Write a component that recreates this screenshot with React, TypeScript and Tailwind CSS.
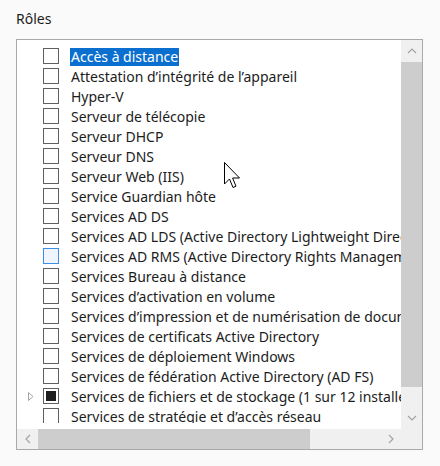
import React from "react";

type Item = { label: string; state?: "none" | "selected" | "hover" | "partial"; expander?: boolean };

const items: Item[] = [
  { label: "Accès à distance", state: "selected" },
  { label: "Attestation d’intégrité de l’appareil" },
  { label: "Hyper-V" },
  { label: "Serveur de télécopie" },
  { label: "Serveur DHCP" },
  { label: "Serveur DNS" },
  { label: "Serveur Web (IIS)" },
  { label: "Service Guardian hôte" },
  { label: "Services AD DS" },
  { label: "Services AD LDS (Active Directory Lightweight Directory Services)" },
  { label: "Services AD RMS (Active Directory Rights Management Services)", state: "hover" },
  { label: "Services Bureau à distance" },
  { label: "Services d’activation en volume" },
  { label: "Services d’impression et de numérisation de document" },
  { label: "Services de certificats Active Directory" },
  { label: "Services de déploiement Windows" },
  { label: "Services de fédération Active Directory (AD FS)" },
  { label: "Services de fichiers et de stockage (1 sur 12 installé(s))", state: "partial", expander: true },
  { label: "Services de stratégie et d’accès réseau" },
];

function Chevron({ dir }: { dir: "up" | "down" | "left" | "right" }) {
  const paths: Record<string, string> = {
    up: "M1 6 L5 2 L9 6",
    down: "M1 2 L5 6 L9 2",
    left: "M6 1 L2 5 L6 9",
    right: "M2 1 L6 5 L2 9",
  };
  const vertical = dir === "up" || dir === "down";
  return (
    <svg width={vertical ? 10 : 8} height={vertical ? 8 : 10} viewBox={vertical ? "0 0 10 8" : "0 0 8 10"}>
      <path d={paths[dir]} fill="none" stroke="#a3a3a3" strokeWidth="1.2" />
    </svg>
  );
}

function Row({ item }: { item: Item }) {
  const state = item.state ?? "none";
  return (
    <div className="flex h-[20px] shrink-0 items-center whitespace-nowrap">
      <div className="flex w-[26px] shrink-0 justify-center pl-[2px]">
        {item.expander && (
          <svg width="6" height="9" viewBox="0 0 6 9">
            <path d="M0.5 0.5 L5 4.5 L0.5 8.5 Z" fill="none" stroke="#a6a6a6" strokeWidth="1" />
          </svg>
        )}
      </div>
      <div
        className={
          state === "hover"
            ? "flex h-[16px] w-[16px] shrink-0 items-center justify-center border border-[#3d8ee8] bg-[#eef5fd]"
            : "flex h-[16px] w-[16px] shrink-0 items-center justify-center border border-[#5f5f5f] bg-white"
        }
      >
        {state === "partial" && <div className="h-[10px] w-[10px] bg-[#1f1f1f]" />}
      </div>
      <div className="ml-[11px]">
        <span
          className={
            state === "selected"
              ? "inline-block h-[18px] bg-[#0a6fcf] px-[1px] leading-[18px] text-white"
              : "inline-block h-[18px] px-[1px] leading-[18px] text-[#1c1c1c]"
          }
        >
          {item.label}
        </span>
      </div>
    </div>
  );
}

export default function App() {
  return (
    <div
      className="relative h-[466px] w-[440px] overflow-hidden bg-[#fafafa] pl-[16px] pt-[9px]"
      style={{ fontFamily: '"Noto Sans", "Open Sans", sans-serif', fontSize: "14px" }}
    >
      <div className="h-[30px] leading-[20px] text-[#1c1c1c]">Rôles</div>
      <div className="flex h-[411px] w-[407px] flex-col border border-[#a9a9a9] bg-white">
        <div className="flex min-h-0 flex-1">
          <div className="min-w-0 flex-1 overflow-hidden pb-[6px] pt-[6px]">
            <div className="flex h-full flex-col overflow-hidden">
              {items.map((it) => (
                <Row key={it.label} item={it} />
              ))}
            </div>
          </div>
          <div className="flex w-[21px] shrink-0 flex-col bg-[#f0f0f0]">
            <div className="flex h-[22px] items-center justify-center">
              <Chevron dir="up" />
            </div>
            <div className="h-[325px] bg-[#cdcdcd]" />
            <div className="flex-1" />
            <div className="flex h-[22px] items-center justify-center">
              <Chevron dir="down" />
            </div>
          </div>
        </div>
        <div className="flex h-[20px] shrink-0 bg-[#f0f0f0]">
          <div className="flex w-[21px] items-center justify-center">
            <Chevron dir="left" />
          </div>
          <div className="w-[272px] bg-[#cdcdcd]" />
          <div className="flex-1" />
          <div className="flex w-[21px] items-center justify-center">
            <Chevron dir="right" />
          </div>
          <div className="w-[21px]" />
        </div>
      </div>
      <svg
        className="absolute left-[224px] top-[162px]"
        width="17"
        height="28"
        viewBox="0 0 17 28"
      >
        <path
          d="M0.5 0.5 L0.5 22 L5.5 17 L9 25.5 L12 24.2 L8.6 16 L15.5 16 Z"
          fill="white"
          stroke="black"
          strokeWidth="1"
          strokeLinejoin="miter"
        />
      </svg>
    </div>
  );
}
